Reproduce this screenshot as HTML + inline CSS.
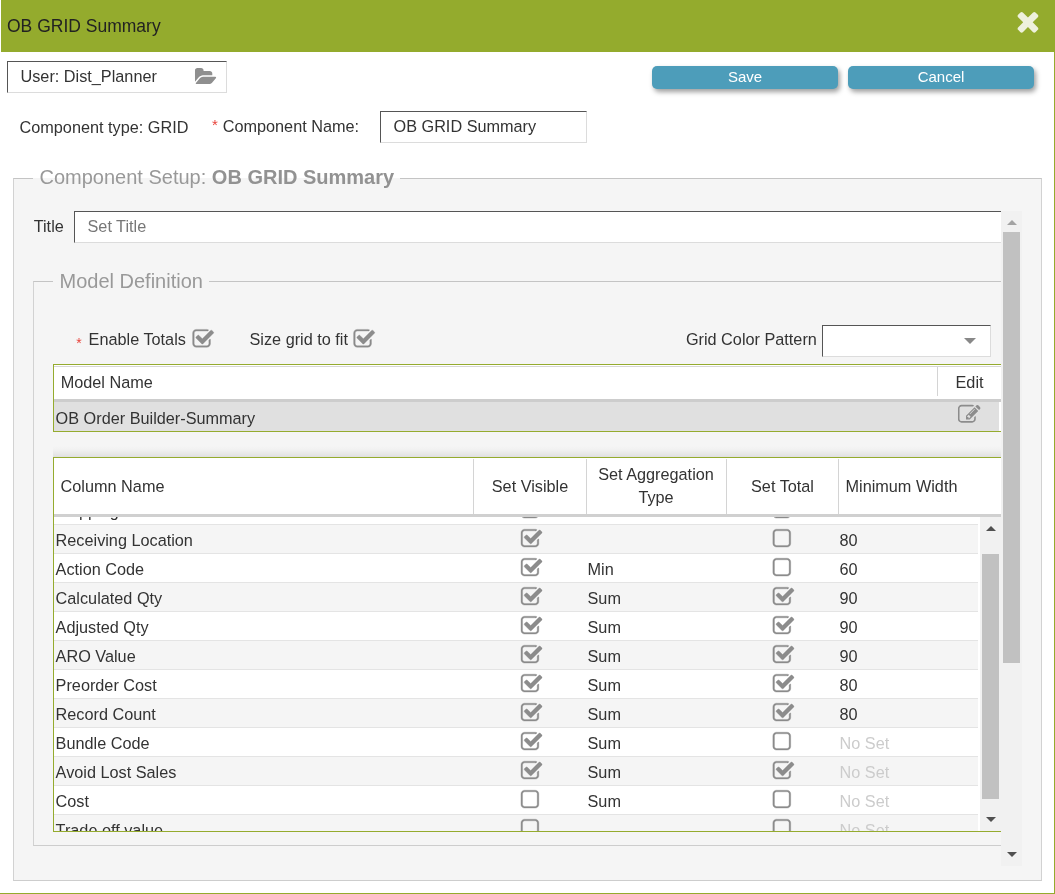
<!DOCTYPE html>
<html lang="en"><head><meta charset="utf-8"><title>OB GRID Summary</title>
<style>
html,body{margin:0;padding:0;background:#fff}
body{width:1055px;height:894px;overflow:hidden;position:relative;font-family:"Liberation Sans",Arial,sans-serif;font-size:16.25px;color:#333}
div,svg{box-sizing:border-box}
.a,.ic{position:absolute}
.t{position:absolute;white-space:nowrap;line-height:32px;height:32px}
.hdr{left:1px;top:0;width:1054px;height:52px;background:#94ab2d}
.hdr .t{font-size:17.5px;color:#222;left:6px;top:9.5px}
.inp{position:absolute;background:#fff;border:1px solid #dcdcdc;border-top:1.3px solid #555;border-left:1.3px solid #555;height:32px}
.btn{position:absolute;top:66px;width:186px;height:23px;border-radius:5px;background:#4d9dba;color:#fff;font-size:15px;line-height:21.7px;text-align:center;box-shadow:2px 3px 5px rgba(0,0,0,.38)}
.red{color:#e8423a}
.fs{position:absolute;border:1px solid #d2d2d2;border-top-color:#c4c4c4;border-bottom-color:#cdcdcd;background:#f5f5f5}
.lg{position:absolute;font-size:20px;line-height:28px;height:28px;color:#999;white-space:nowrap;background:linear-gradient(#fff 0,#fff 50%,#f5f5f5 50%,#f5f5f5 100%)}
.lg b{color:#929292}
.grid{position:absolute;border:1px solid #95ab2e;border-right:0;background:#fff;overflow:hidden}
.vs{position:absolute;width:1px;background:#d4d4d4}
.h{position:absolute;white-space:nowrap;line-height:23px;color:#333}
.hc{text-align:center}
.row{position:absolute;left:0;width:924px;height:29px;border-top:1px solid #e4e4e4}
.row .c{position:absolute;top:0;line-height:30px;height:28px;white-space:nowrap}
.c1{left:1.6px} .c3{left:533.5px} .c5{left:785.5px}
.ns{color:#ccc}
.sb{position:absolute;background:#f1f1f1}
.th{position:absolute;background:#c1c1c1}
.tri{position:absolute;width:0;height:0;border-left:5px solid transparent;border-right:5px solid transparent}
.up{border-bottom:5px solid #505050} .dn{border-top:5px solid #505050}
</style></head><body>
<div id="wrap" style="position:absolute;left:0;top:0;width:1055px;height:894px;overflow:hidden;will-change:transform">
<svg width="0" height="0" style="position:absolute"><defs><symbol id="i-times" viewBox="0 0 1792 1792"><path d="M1490 1322q0 40-28 68l-136 136q-28 28-68 28t-68-28l-294-294-294 294q-28 28-68 28t-68-28l-136-136q-28-28-28-68t28-68l294-294-294-294q-28-28-28-68t28-68l136-136q28-28 68-28t68 28l294 294 294-294q28-28 68-28t68 28l136 136q28 28 28 68t-28 68l-294 294 294 294q28 28 28 68z"/></symbol><symbol id="i-folder" viewBox="0 0 1920 1792"><path d="M1879 952q0 31-31 66l-336 396q-43 51-120.500 86.500t-143.500 35.500h-1088q-34 0-60.500-13t-26.500-43q0-31 31-66l336-396q43-51 120.500-86.500t143.500-35.500h1088q34 0 60.500 13t26.500 43zm-343-344v160h-832q-94 0-197 47.500t-164 119.500l-337 396-5 6q0-4-.5-12.500t-.5-12.500v-960q0-92 66-158t158-66h320q92 0 158 66t66 158v32h544q92 0 158 66t66 158z"/></symbol><symbol id="i-check" viewBox="0 0 1792 1792"><path d="M1472 930v318q0 119-84.500 203.500t-203.500 84.500h-832q-119 0-203.500-84.500t-84.500-203.500v-832q0-119 84.500-203.500t203.500-84.500h832q63 0 117 25 15 7 18 23 3 17-9 29l-49 49q-10 10-23 10-3 0-9-2-23-6-45-6h-832q-66 0-113 47t-47 113v832q0 66 47 113t113 47h832q66 0 113-47t47-113v-254q0-13 9-22l64-64q10-10 23-10 6 0 12 3 20 8 20 29zm231-489l-814 814q-24 24-57 24t-57-24l-430-430q-24-24-24-57t24-57l110-110q24-24 57-24t57 24l263 263 647-647q24-24 57-24t57 24l110 110q24 24 24 57t-24 57z"/></symbol><symbol id="i-square" viewBox="0 0 1792 1792"><path d="M1312 256h-832q-66 0-113 47t-47 113v832q0 66 47 113t113 47h832q66 0 113-47t47-113v-832q0-66-47-113t-113-47zm288 160v832q0 119-84.500 203.500t-203.500 84.500h-832q-119 0-203.500-84.500t-84.500-203.500v-832q0-119 84.500-203.500t203.500-84.500h832q119 0 203.500 84.500t84.500 203.500z"/></symbol><symbol id="i-edit" viewBox="0 0 1792 1792"><path d="M888 1184l116-116-152-152-116 116v56h96v96h56zm440-720q-16-16-33 1l-350 350q-17 17-1 33t33-1l350-350q17-17 1-33zm80 594v190q0 119-84.500 203.500t-203.500 84.500h-832q-119 0-203.500-84.500t-84.500-203.500v-832q0-119 84.500-203.500t203.500-84.500h832q63 0 117 25 15 7 18 23 3 17-9 29l-49 49q-14 14-32 8-23-6-45-6h-832q-66 0-113 47t-47 113v832q0 66 47 113t113 47h832q66 0 113-47t47-113v-126q0-13 9-22l64-64q15-15 35-7t20 29zm-96-738l288 288-672 672h-288v-288zm444 132l-92 92-288-288 92-92q28-28 68-28t68 28l152 152q28 28 28 68t-28 68z"/></symbol></defs></svg>

<div class="a hdr"><div class="t">OB GRID Summary</div><svg class="ic" viewBox="0 0 33 33" style="left:1011px;top:5px;width:33px;height:33px;fill:#eef1dc;"><use href="#i-times" x="0.33" y="0.62" width="31.25" height="31.25"/></svg></div>
<div class="a" style="left:1054px;top:0;width:1px;height:894px;background:#94ab2d"></div>
<div class="a" style="left:0;top:893px;width:1055px;height:1px;background:#94ab2d"></div>

<div class="inp" style="left:7px;top:61px;width:220px"></div>
<div class="t" style="left:20.5px;top:60.2px">User: Dist_Planner</div>
<svg class="ic" viewBox="0 0 24 22" style="left:194px;top:66px;width:24px;height:22px;fill:#8f8f8f;"><use href="#i-folder" x="0.90" y="0.65" width="21.75" height="20.30"/></svg>

<div class="btn" style="left:652px">Save</div>
<div class="btn" style="left:848px">Cancel</div>

<div class="t" style="left:19.5px;top:110.7px">Component type: GRID</div>
<div class="t red" style="left:212px;top:109px;font-size:15px">*</div>
<div class="t" style="left:222.7px;top:110.2px">Component Name:</div>
<div class="inp" style="left:380px;top:111px;width:207px"></div>
<div class="t" style="left:393.5px;top:110.2px">OB GRID Summary</div>

<!-- outer fieldset -->
<div class="fs" style="left:13px;top:178px;width:1029px;height:703px"></div>
<div class="lg" style="left:33px;top:164px;width:367px;padding-left:6.5px;line-height:27.4px">Component Setup: <b>OB GRID Summary</b></div>

<!-- scroll viewport -->
<div class="a" style="left:14px;top:211px;width:987px;height:655px;overflow:hidden">
 <div class="a" style="left:-14px;top:-211px;width:1100px;height:900px">
  <div class="t" style="left:33.7px;top:209.5px">Title</div>
  <div class="inp" style="left:74px;top:211px;width:960px"></div>
  <div class="t" style="left:87.5px;top:209.5px;color:#777">Set Title</div>

  <div class="fs" style="left:33px;top:281px;width:1000px;height:565px"></div>
  <div class="lg" style="left:53px;top:266.8px;width:156px;padding-left:6.5px;background:#f5f5f5">Model Definition</div>

  <div class="t red" style="left:76.3px;top:326.8px;font-size:14px">*</div>
  <div class="t" style="left:88.6px;top:323px">Enable Totals</div>
  <svg class="ic" viewBox="0 0 25 25" style="left:191px;top:327px;width:25px;height:25px;fill:#8c8c8c;stroke:#8c8c8c;stroke-width:26px;"><use href="#i-check" x="0.79" y="0.77" width="22.75" height="22.75"/></svg>
  <div class="t" style="left:249.5px;top:323px">Size grid to fit</div>
  <svg class="ic" viewBox="0 0 25 25" style="left:352px;top:327px;width:25px;height:25px;fill:#8c8c8c;stroke:#8c8c8c;stroke-width:26px;"><use href="#i-check" x="0.79" y="0.77" width="22.75" height="22.75"/></svg>
  <div class="t" style="left:685.9px;top:323.4px">Grid Color Pattern</div>
  <div class="inp" style="left:822px;top:325px;width:169px"></div>
  <div class="tri" style="left:964px;top:338px;border-left-width:6px;border-right-width:6px;border-top:6.5px solid #888"></div>

  <!-- grid 1 -->
  <div class="grid" style="left:53px;top:364px;width:960px;height:68px">
    <div class="a" style="left:0;top:1px;width:960px;height:1px;background:#d6d6d6"></div>
    <div class="h" style="left:6.7px;top:1.1px;line-height:32px">Model Name</div>
    <div class="vs" style="left:883px;top:2px;height:29px"></div>
    <div class="h" style="left:901.5px;top:1.3px;line-height:32px">Edit</div>
    <div class="a" style="left:0;top:34px;width:960px;height:3px;background:#cdcdcd"></div>
    <div class="a" style="left:0;top:37px;width:945px;height:29px;background:#e0e0e0"></div>
    <div class="h" style="left:1.6px;top:36.6px;line-height:32px">OB Order Builder-Summary</div>
    <svg class="ic" viewBox="0 0 25 24" style="left:903px;top:38px;width:25px;height:24px;fill:#8c8c8c;"><use href="#i-edit" x="0.90" y="0.18" width="22.75" height="22.75"/></svg>
  </div>

  <!-- grid 2 -->
  <div class="a" style="left:53px;top:446px;width:960px;height:11px;background:linear-gradient(rgba(0,0,0,0),rgba(0,0,0,.02) 40%,rgba(0,0,0,.085))"></div>
  <div class="grid" style="left:53px;top:457px;width:960px;height:375px">
    <div class="h" style="left:6.6px;top:17px">Column Name</div>
    <div class="vs" style="left:419px;top:1px;height:55px"></div>
    <div class="h hc" style="left:420px;width:112px;top:17px">Set Visible</div>
    <div class="vs" style="left:532px;top:1px;height:55px"></div>
    <div class="h hc" style="left:532.5px;width:139px;top:5.2px">Set Aggregation<br>Type</div>
    <div class="vs" style="left:672px;top:1px;height:55px"></div>
    <div class="h hc" style="left:673px;width:111px;top:17px">Set Total</div>
    <div class="vs" style="left:784px;top:1px;height:55px"></div>
    <div class="h" style="left:791.5px;top:17px">Minimum Width</div>
    <div class="a" style="left:0;top:56px;width:960px;height:3px;background:#d0d0d0"></div>
    <!-- body -->
    <div class="a" style="left:0;top:59px;width:926px;height:314px;overflow:hidden;background:#fff">
      <div class="a" style="left:0;top:0;width:926px;height:320px">
      <div class="row" style="top:-22px;background:#fff"><div class="c c1">Shipping Location</div><svg class="ic" viewBox="0 0 24 25" style="left:466px;top:2px;width:24px;height:25px;fill:#8c8c8c;stroke:#8c8c8c;stroke-width:26px;"><use href="#i-check" x="0.14" y="0.58" width="22.75" height="22.75"/></svg><svg class="ic" viewBox="0 0 25 25" style="left:716px;top:2px;width:25px;height:25px;fill:#8c8c8c;stroke:#8c8c8c;stroke-width:26px;"><use href="#i-square" x="0.41" y="0.58" width="22.75" height="22.75"/></svg><div class="c c5">80</div></div><div class="row" style="top:7px;background:#f5f5f5"><div class="c c1">Receiving Location</div><svg class="ic" viewBox="0 0 24 25" style="left:466px;top:2px;width:24px;height:25px;fill:#8c8c8c;stroke:#8c8c8c;stroke-width:26px;"><use href="#i-check" x="0.14" y="0.58" width="22.75" height="22.75"/></svg><svg class="ic" viewBox="0 0 25 25" style="left:716px;top:2px;width:25px;height:25px;fill:#8c8c8c;stroke:#8c8c8c;stroke-width:26px;"><use href="#i-square" x="0.41" y="0.58" width="22.75" height="22.75"/></svg><div class="c c5">80</div></div><div class="row" style="top:36px;background:#fff"><div class="c c1">Action Code</div><svg class="ic" viewBox="0 0 24 25" style="left:466px;top:2px;width:24px;height:25px;fill:#8c8c8c;stroke:#8c8c8c;stroke-width:26px;"><use href="#i-check" x="0.14" y="0.58" width="22.75" height="22.75"/></svg><div class="c c3">Min</div><svg class="ic" viewBox="0 0 25 25" style="left:716px;top:2px;width:25px;height:25px;fill:#8c8c8c;stroke:#8c8c8c;stroke-width:26px;"><use href="#i-square" x="0.41" y="0.58" width="22.75" height="22.75"/></svg><div class="c c5">60</div></div><div class="row" style="top:65px;background:#f5f5f5"><div class="c c1">Calculated Qty</div><svg class="ic" viewBox="0 0 24 25" style="left:466px;top:2px;width:24px;height:25px;fill:#8c8c8c;stroke:#8c8c8c;stroke-width:26px;"><use href="#i-check" x="0.14" y="0.58" width="22.75" height="22.75"/></svg><div class="c c3">Sum</div><svg class="ic" viewBox="0 0 24 25" style="left:718px;top:2px;width:24px;height:25px;fill:#8c8c8c;stroke:#8c8c8c;stroke-width:26px;"><use href="#i-check" x="0.04" y="0.58" width="22.75" height="22.75"/></svg><div class="c c5">90</div></div><div class="row" style="top:94px;background:#fff"><div class="c c1">Adjusted Qty</div><svg class="ic" viewBox="0 0 24 25" style="left:466px;top:2px;width:24px;height:25px;fill:#8c8c8c;stroke:#8c8c8c;stroke-width:26px;"><use href="#i-check" x="0.14" y="0.58" width="22.75" height="22.75"/></svg><div class="c c3">Sum</div><svg class="ic" viewBox="0 0 24 25" style="left:718px;top:2px;width:24px;height:25px;fill:#8c8c8c;stroke:#8c8c8c;stroke-width:26px;"><use href="#i-check" x="0.04" y="0.58" width="22.75" height="22.75"/></svg><div class="c c5">90</div></div><div class="row" style="top:123px;background:#f5f5f5"><div class="c c1">ARO Value</div><svg class="ic" viewBox="0 0 24 25" style="left:466px;top:2px;width:24px;height:25px;fill:#8c8c8c;stroke:#8c8c8c;stroke-width:26px;"><use href="#i-check" x="0.14" y="0.58" width="22.75" height="22.75"/></svg><div class="c c3">Sum</div><svg class="ic" viewBox="0 0 24 25" style="left:718px;top:2px;width:24px;height:25px;fill:#8c8c8c;stroke:#8c8c8c;stroke-width:26px;"><use href="#i-check" x="0.04" y="0.58" width="22.75" height="22.75"/></svg><div class="c c5">90</div></div><div class="row" style="top:152px;background:#fff"><div class="c c1">Preorder Cost</div><svg class="ic" viewBox="0 0 24 25" style="left:466px;top:2px;width:24px;height:25px;fill:#8c8c8c;stroke:#8c8c8c;stroke-width:26px;"><use href="#i-check" x="0.14" y="0.58" width="22.75" height="22.75"/></svg><div class="c c3">Sum</div><svg class="ic" viewBox="0 0 24 25" style="left:718px;top:2px;width:24px;height:25px;fill:#8c8c8c;stroke:#8c8c8c;stroke-width:26px;"><use href="#i-check" x="0.04" y="0.58" width="22.75" height="22.75"/></svg><div class="c c5">80</div></div><div class="row" style="top:181px;background:#f5f5f5"><div class="c c1">Record Count</div><svg class="ic" viewBox="0 0 24 25" style="left:466px;top:2px;width:24px;height:25px;fill:#8c8c8c;stroke:#8c8c8c;stroke-width:26px;"><use href="#i-check" x="0.14" y="0.58" width="22.75" height="22.75"/></svg><div class="c c3">Sum</div><svg class="ic" viewBox="0 0 24 25" style="left:718px;top:2px;width:24px;height:25px;fill:#8c8c8c;stroke:#8c8c8c;stroke-width:26px;"><use href="#i-check" x="0.04" y="0.58" width="22.75" height="22.75"/></svg><div class="c c5">80</div></div><div class="row" style="top:210px;background:#fff"><div class="c c1">Bundle Code</div><svg class="ic" viewBox="0 0 24 25" style="left:466px;top:2px;width:24px;height:25px;fill:#8c8c8c;stroke:#8c8c8c;stroke-width:26px;"><use href="#i-check" x="0.14" y="0.58" width="22.75" height="22.75"/></svg><div class="c c3">Sum</div><svg class="ic" viewBox="0 0 25 25" style="left:716px;top:2px;width:25px;height:25px;fill:#8c8c8c;stroke:#8c8c8c;stroke-width:26px;"><use href="#i-square" x="0.41" y="0.58" width="22.75" height="22.75"/></svg><div class="c c5 ns">No Set</div></div><div class="row" style="top:239px;background:#f5f5f5"><div class="c c1">Avoid Lost Sales</div><svg class="ic" viewBox="0 0 24 25" style="left:466px;top:2px;width:24px;height:25px;fill:#8c8c8c;stroke:#8c8c8c;stroke-width:26px;"><use href="#i-check" x="0.14" y="0.58" width="22.75" height="22.75"/></svg><div class="c c3">Sum</div><svg class="ic" viewBox="0 0 24 25" style="left:718px;top:2px;width:24px;height:25px;fill:#8c8c8c;stroke:#8c8c8c;stroke-width:26px;"><use href="#i-check" x="0.04" y="0.58" width="22.75" height="22.75"/></svg><div class="c c5 ns">No Set</div></div><div class="row" style="top:268px;background:#fff"><div class="c c1">Cost</div><svg class="ic" viewBox="0 0 25 25" style="left:464px;top:2px;width:25px;height:25px;fill:#8c8c8c;stroke:#8c8c8c;stroke-width:26px;"><use href="#i-square" x="0.51" y="0.58" width="22.75" height="22.75"/></svg><div class="c c3">Sum</div><svg class="ic" viewBox="0 0 25 25" style="left:716px;top:2px;width:25px;height:25px;fill:#8c8c8c;stroke:#8c8c8c;stroke-width:26px;"><use href="#i-square" x="0.41" y="0.58" width="22.75" height="22.75"/></svg><div class="c c5 ns">No Set</div></div><div class="row" style="top:297px;background:#f5f5f5"><div class="c c1">Trade off value</div><svg class="ic" viewBox="0 0 25 25" style="left:464px;top:2px;width:25px;height:25px;fill:#8c8c8c;stroke:#8c8c8c;stroke-width:26px;"><use href="#i-square" x="0.51" y="0.58" width="22.75" height="22.75"/></svg><svg class="ic" viewBox="0 0 25 25" style="left:716px;top:2px;width:25px;height:25px;fill:#8c8c8c;stroke:#8c8c8c;stroke-width:26px;"><use href="#i-square" x="0.41" y="0.58" width="22.75" height="22.75"/></svg><div class="c c5 ns">No Set</div></div>
      </div>
    </div>
    <!-- inner scrollbar -->
    <div class="sb" style="left:926px;top:59px;width:21px;height:314px">
      <div class="tri up" style="left:5.5px;top:9px"></div>
      <div class="th" style="left:2px;top:37px;width:17px;height:245px"></div>
      <div class="tri dn" style="left:5.5px;top:300px"></div>
    </div>
  </div>
 </div>
</div>

<!-- outer scrollbar -->
<div class="sb" style="left:1001px;top:211px;width:20.5px;height:655px">
  <div class="tri" style="left:5.5px;top:9px;border-bottom:5px solid #a3a3a3"></div>
  <div class="th" style="left:2px;top:21px;width:17px;height:431px"></div>
  <div class="tri dn" style="left:5.5px;top:640.5px"></div>
</div>
</div>
</body></html>
